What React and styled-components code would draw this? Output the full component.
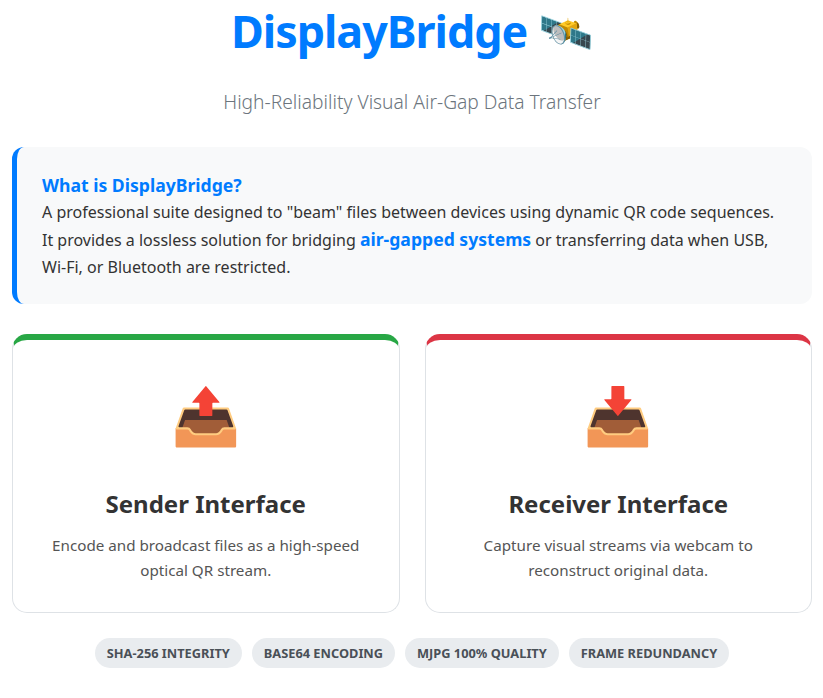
import React from "react";
import styled, { createGlobalStyle } from "styled-components";

const GlobalStyle = createGlobalStyle`
  html, body {
    margin: 0;
    padding: 0;
    background: #ffffff;
    font-family: "Noto Sans", "Liberation Sans", sans-serif;
    color: #333333;
  }
`;

const Page = styled.div`
  width: 800px;
  margin: 0 0 0 12px;
`;

const Title = styled.h1`
  margin: 0;
  text-align: center;
  font-size: 44.8px;
  line-height: 61px;
  font-weight: 700;
  letter-spacing: -1px;
  color: #007bff;
`;

const Subtitle = styled.p`
  margin: 28px 0 0;
  text-align: center;
  font-size: 19.2px;
  line-height: 26px;
  font-weight: 300;
  color: #6c757d;
`;

const Notice = styled.section`
  margin-top: 32px;
  padding: 25px 25px 23px;
  background: #f8f9fa;
  border-left: 5px solid #007bff;
  border-radius: 12px;
  font-size: 16px;
  line-height: 27px;
`;

const NoticeTitle = styled.strong`
  display: block;
  font-size: 17.6px;
  color: #007bff;
`;

const Highlight = styled.strong`
  font-size: 17.6px;
  color: #007bff;
`;

const Cards = styled.div`
  display: grid;
  grid-template-columns: 1fr 1fr;
  gap: 25px;
  margin-top: 30px;
`;

const Card = styled.article`
  display: flex;
  flex-direction: column;
  align-items: center;
  height: 279px;
  box-sizing: border-box;
  padding: 31px 30px 0;
  text-align: center;
  background: #ffffff;
  border: 1px solid #dee2e6;
  border-top: 6px solid ${(p) => p.$accent};
  border-radius: 15px;
`;

const CardIcon = styled.div`
  font-size: 56px;
  line-height: 87px;
`;

const CardTitle = styled.h2`
  margin: 29px 0 0;
  font-size: 24px;
  line-height: 33px;
  font-weight: 700;
  color: #333333;
`;

const CardText = styled.p`
  margin: 13px 0 0;
  font-size: 15.2px;
  line-height: 25px;
  color: #555555;
`;

const Tags = styled.div`
  display: flex;
  justify-content: center;
  gap: 10px;
  margin-top: 25px;
`;

const Tag = styled.span`
  padding: 6px 12px;
  background: #e9ecef;
  border-radius: 20px;
  font-size: 12.8px;
  line-height: 18px;
  font-weight: 700;
  color: #495057;
`;

const TAGS = [
  "SHA-256 INTEGRITY",
  "BASE64 ENCODING",
  "MJPG 100% QUALITY",
  "FRAME REDUNDANCY",
];

export default function App() {
  return (
    <Page>
      <GlobalStyle />
      <Title>DisplayBridge 🛰️</Title>
      <Subtitle>High-Reliability Visual Air-Gap Data Transfer</Subtitle>
      <Notice>
        <NoticeTitle>What is DisplayBridge?</NoticeTitle>
        A professional suite designed to "beam" files between devices using
        dynamic QR code sequences. It provides a lossless solution for bridging{" "}
        <Highlight>air-gapped systems</Highlight> or transferring data when USB,
        Wi-Fi, or Bluetooth are restricted.
      </Notice>
      <Cards>
        <Card $accent="#28a745">
          <CardIcon>📤</CardIcon>
          <CardTitle>Sender Interface</CardTitle>
          <CardText>
            Encode and broadcast files as a high-speed optical QR stream.
          </CardText>
        </Card>
        <Card $accent="#dc3545">
          <CardIcon>📥</CardIcon>
          <CardTitle>Receiver Interface</CardTitle>
          <CardText>
            Capture visual streams via webcam to reconstruct original data.
          </CardText>
        </Card>
      </Cards>
      <Tags>
        {TAGS.map((t) => (
          <Tag key={t}>{t}</Tag>
        ))}
      </Tags>
    </Page>
  );
}
